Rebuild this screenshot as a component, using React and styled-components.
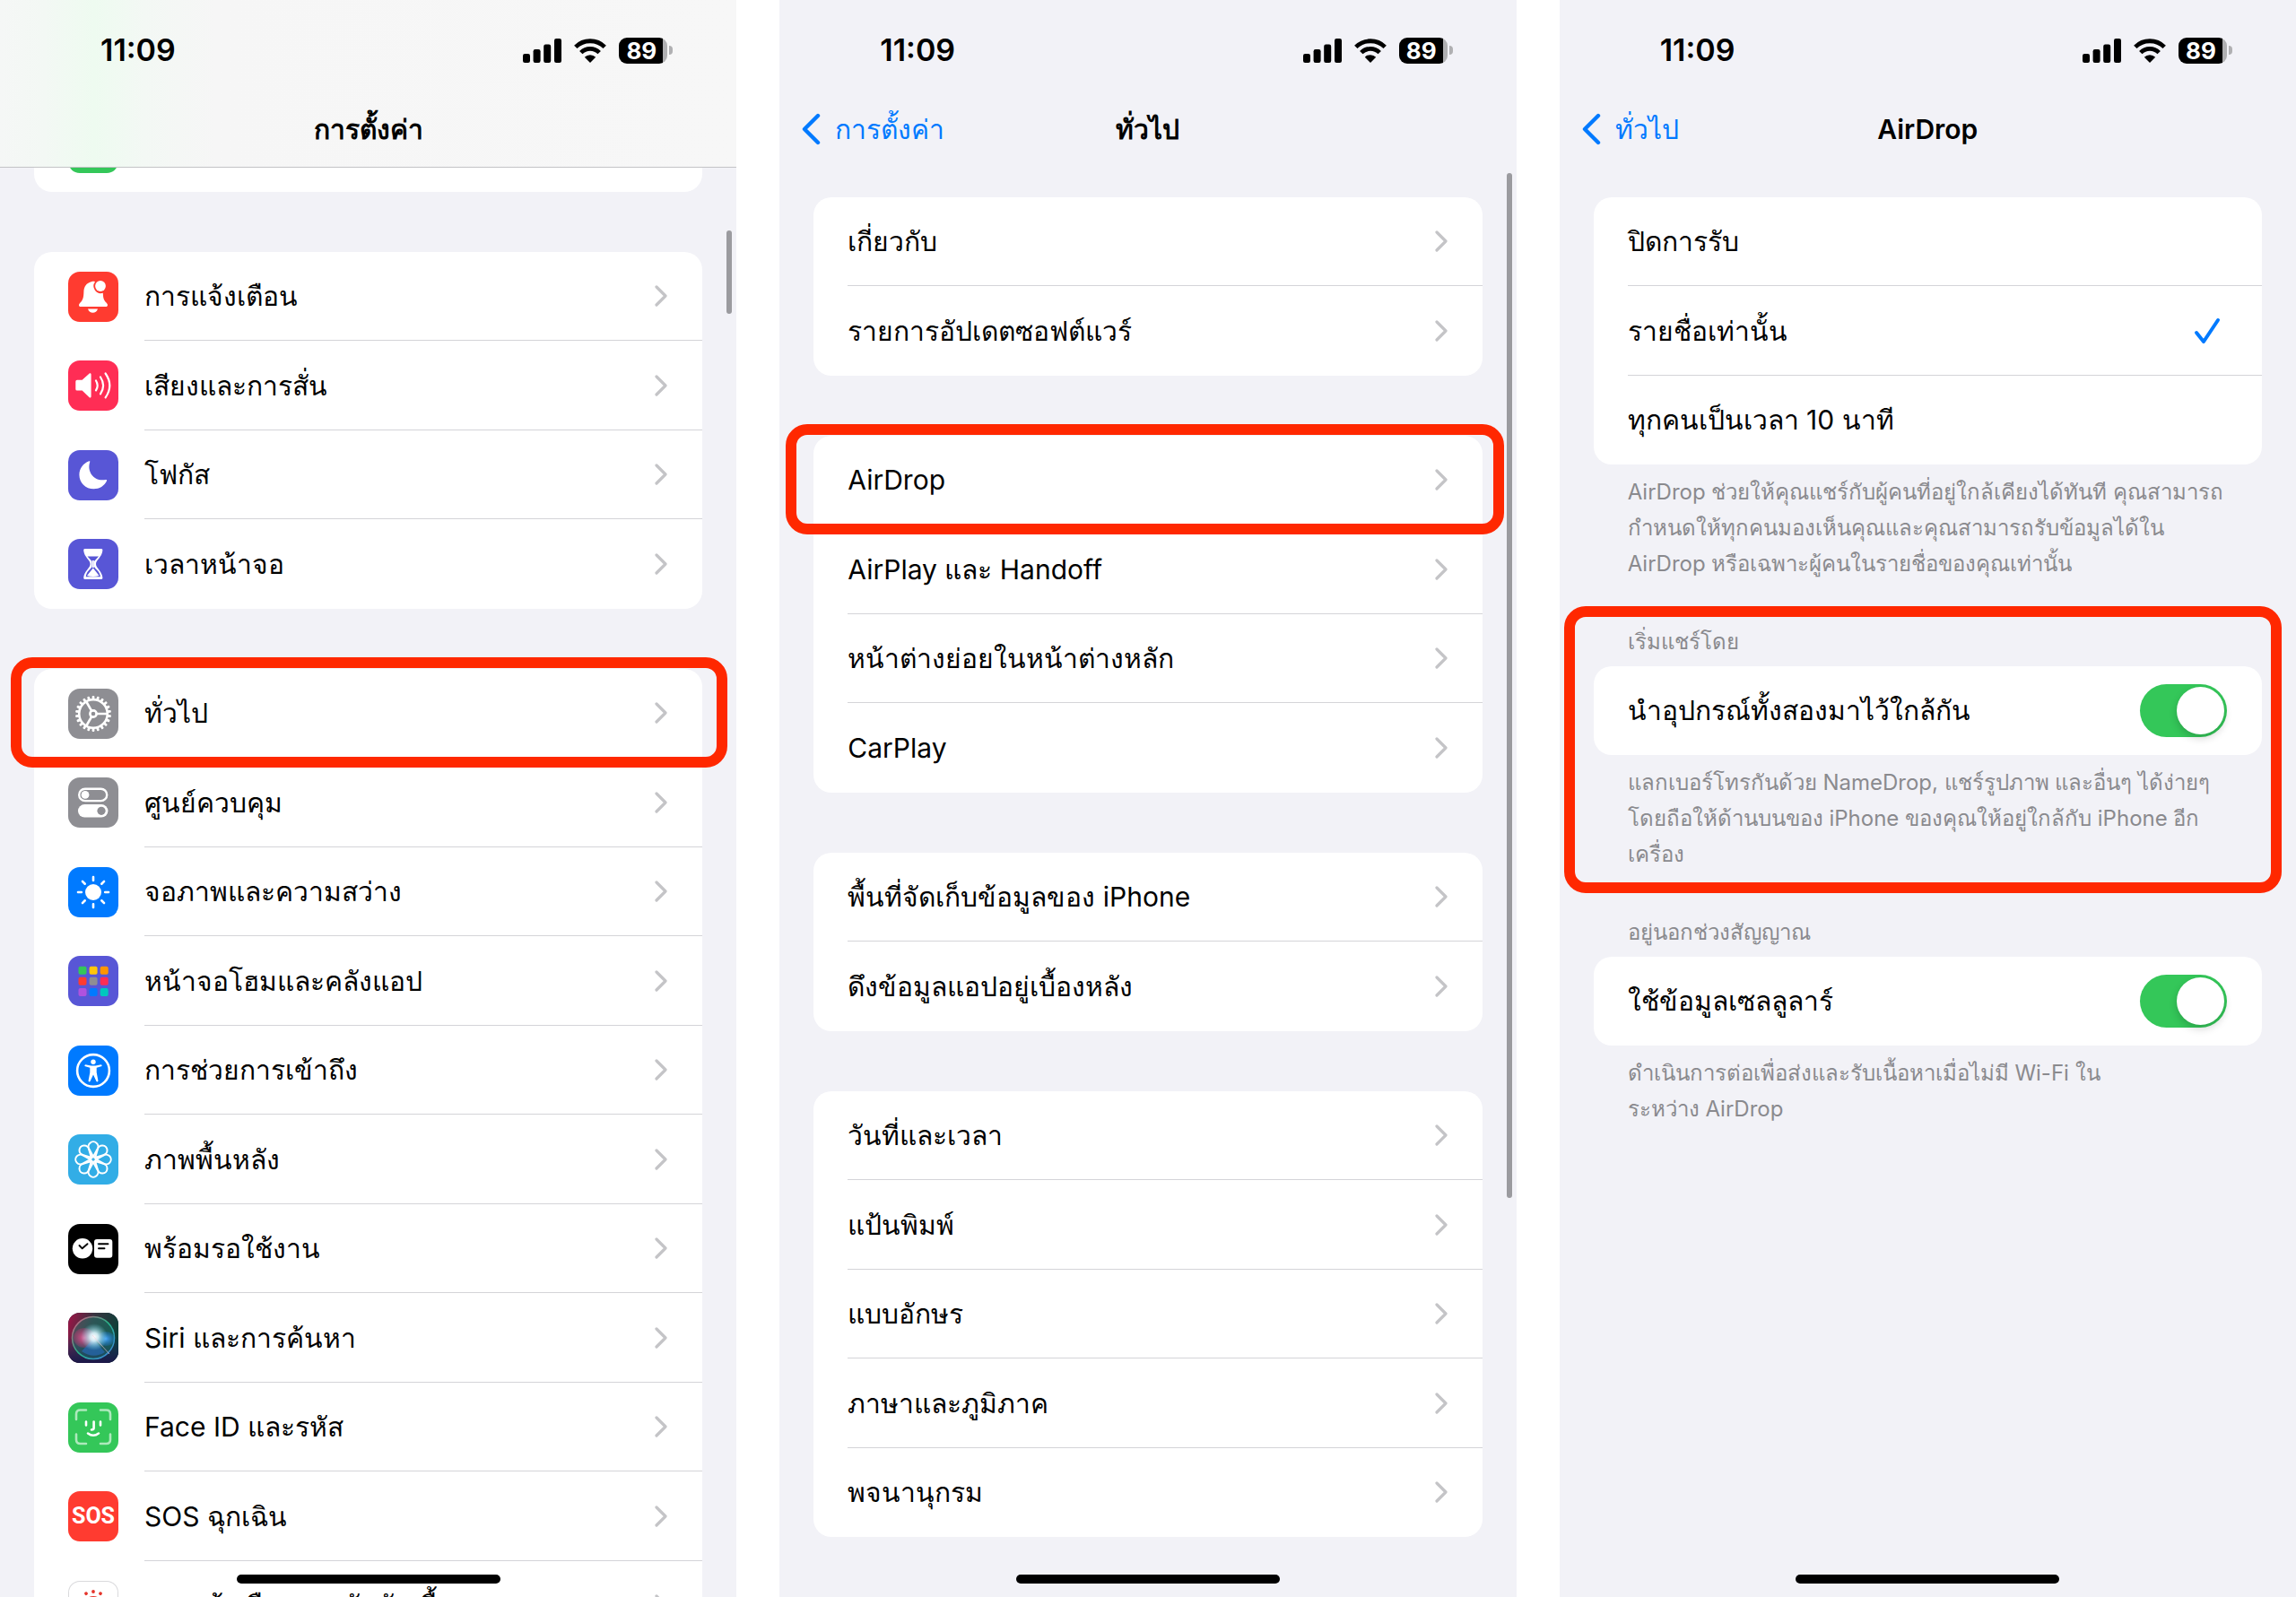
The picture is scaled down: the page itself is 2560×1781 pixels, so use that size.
import React from "react";
import styled, { createGlobalStyle, css } from "styled-components";

const color = {
  canvas: "#f2f2f7",
  ink: "#000000",
  muted: "#8a8a8e",
  line: "#d4d4d8",
  chevron: "#c4c4c7",
  blue: "#007aff",
  green: "#34c759",
  marker: "#ff2800",
};

const GlobalStyle = createGlobalStyle`
  *, *::before, *::after { box-sizing: border-box; }
  body {
    margin: 0;
    background: #ffffff;
    color: ${color.ink};
    font-family: Inter, Garuda, "Noto Sans", sans-serif;
    font-size: 30px;
    line-height: 40px;
  }
  h1, h2, p, ul { margin: 0; padding: 0; font: inherit; }
  ul { list-style: none; }
  a { color: inherit; text-decoration: none; }
  svg { display: block; flex: none; }
`;

/* ---------- page ---------- */

const Board = styled.main`
  display: grid;
  grid-template-columns: repeat(3, minmax(0, 1fr));
  gap: 48px;
  height: 100vh;
  overflow: hidden;
`;

const Screen = styled.section`
  position: relative;
  display: flex;
  flex-direction: column;
  overflow: hidden;
  background: ${color.canvas};
`;

const Header = styled.header`
  position: relative;
  z-index: 1;
  flex: none;
  padding-bottom: 10px;
  border-bottom: 1px solid transparent;
  ${(p) =>
    p.$frosted &&
    css`
      border-color: #c3c3c6;
      background: linear-gradient(90deg, #f5f7f6 0, #f3f8f4 50px, #eefbf0 105px, #f3f8f4 160px, #f6f6f6 240px, #f7f7f7 100%);
    `}
`;

const StatusBar = styled.div`
  display: flex;
  align-items: center;
  justify-content: space-between;
  height: 112px;
  padding: 0 71px 0 112px;
`;

const Clock = styled.time`
  font-size: 34px;
  font-weight: 600;
`;

const StatusIcons = styled.div`
  display: flex;
  align-items: center;
  gap: 14px;
`;

const Battery = styled.div`
  display: flex;
  align-items: center;
  gap: 2px;
`;

const BatteryBody = styled.span`
  width: 54px;
  height: 29px;
  padding-right: 4px;
  border-radius: 9px;
  background: linear-gradient(90deg, #000 0 49px, #b0b0b2 49px);
  color: #ffffff;
  font-size: 26px;
  font-weight: 700;
  line-height: 29px;
  text-align: center;
`;

const BatteryTip = styled.span`
  width: 4px;
  height: 10px;
  border-radius: 0 5px 5px 0;
  background: #b0b0b2;
`;

const NavBar = styled.nav`
  display: grid;
  grid-template-columns: 1fr auto 1fr;
  align-items: center;
  height: 64px;
`;

const Title = styled.h1`
  && { font-weight: 600; }
  grid-column: 2;
`;

const Back = styled.a`
  display: flex;
  align-items: center;
  gap: 16px;
  padding-left: 24px;
  && { color: ${color.blue}; }
`;

const Content = styled.div`
  display: flex;
  flex-direction: column;
  gap: 67px;
  padding: ${(p) => (p.$scrolled ? 0 : 33)}px 38px 0;
`;

/* ---------- lists ---------- */

const Card = styled.ul`
  flex: none;
  border-radius: 20px;
  background: #ffffff;
  ${(p) => p.$scrolledAway && css`margin-top: -72px;`}
`;

const Item = styled.li`
  position: relative;
  height: 99px;
  &:nth-child(even) { height: 100px; }
`;

const rowLayout = css`
  display: flex;
  align-items: center;
  gap: 29px;
  height: 100%;
  padding-left: 38px;
`;

const RowLink = styled.a`${rowLayout}`;
const RowLabel = styled.label`${rowLayout}`;

const RowBody = styled.span`
  display: flex;
  flex: 1;
  align-items: center;
  justify-content: space-between;
  height: 100%;
  padding-right: ${(p) => p.$inset || 39}px;
  border-bottom: 1px solid ${color.line};
  li:last-child & { border-color: transparent; }
`;

const Marker = styled.span`
  position: absolute;
  z-index: 2;
  top: ${(p) => p.$top || -13}px;
  right: ${(p) => p.$right}px;
  bottom: ${(p) => p.$bottom || -11}px;
  left: ${(p) => p.$left}px;
  border: 12px solid ${color.marker};
  border-radius: 24px;
  pointer-events: none;
`;

const Tile = styled.span`
  display: flex;
  flex: none;
  align-items: center;
  justify-content: center;
  overflow: hidden;
  width: 56px;
  height: 56px;
  border-radius: 13px;
  background: ${(p) => p.$bg};
  color: #ffffff;
  font: 700 25px/28px "Liberation Sans Narrow", Roboto, sans-serif;
  ${(p) => p.$outlined && css`box-shadow: inset 0 0 0 1px #d9d9dc;`}
`;

/* ---------- form parts ---------- */

const HiddenRadio = styled.input`
  position: absolute;
  opacity: 0;
  & ~ svg { visibility: hidden; }
  &:checked ~ svg { visibility: visible; }
`;

const Switch = styled.input`
  flex: none;
  appearance: none;
  display: flex;
  width: 97px;
  height: 59px;
  margin: 0;
  padding: 3px;
  border-radius: 30px;
  background: #e9e9eb;
  &:checked { justify-content: flex-end; background: ${color.green}; }
  &::before {
    content: "";
    width: 53px;
    height: 53px;
    border-radius: 50%;
    background: #ffffff;
    box-shadow: 0 4px 10px rgba(0, 0, 0, 0.18);
  }
`;

const Groups = styled.div`
  display: flex;
  flex-direction: column;
  gap: 47px;
  padding: 33px 38px 0;
`;

const Group = styled.section`
  position: relative;
  display: flex;
  flex-direction: column;
`;

const Caption = styled.h2`
  && { padding: 0 38px 7px; color: ${color.muted}; font-size: 24px; line-height: 40px; }
`;

const Note = styled.p`
  && { padding: 11px 0 0 38px; color: ${color.muted}; font-size: 24px; line-height: 40px; }
  white-space: nowrap;
`;

const HomeBar = styled.span`
  position: absolute;
  z-index: 3;
  bottom: 15px;
  left: 50%;
  width: 294px;
  height: 10px;
  margin-left: -147px;
  border-radius: 5px;
  background: #000000;
`;

const ScrollThumb = styled.span`
  position: absolute;
  z-index: 1;
  top: ${(p) => p.$top}px;
  right: 5px;
  width: 6px;
  height: ${(p) => p.$length}px;
  border-radius: 3px;
  background: #9b9b9f;
`;

/* ---------- drawings ---------- */

const Chevron = () => (
  <svg width="14" height="24" viewBox="0 0 14 24" fill="none" stroke={color.chevron} strokeWidth="3.2" strokeLinecap="round" strokeLinejoin="round" aria-hidden="true">
    <path d="M2 2 L12 12 L2 22" />
  </svg>
);

const BackChevron = () => (
  <svg width="22" height="36" viewBox="0 0 22 36" fill="none" stroke="currentColor" strokeWidth="4.4" strokeLinecap="round" strokeLinejoin="round" aria-hidden="true">
    <path d="M19 3 L4 18 L19 33" />
  </svg>
);

const Check = () => (
  <svg width="30" height="30" viewBox="0 0 30 30" fill="none" stroke={color.blue} strokeWidth="4" strokeLinecap="round" strokeLinejoin="round" aria-hidden="true">
    <path d="M3 17 L11 27 L27 3" />
  </svg>
);

const Signal = () => (
  <svg width="43" height="27" viewBox="0 0 43 27" aria-hidden="true">
    <rect x="0" y="17" width="8" height="10" rx="2.2" />
    <rect x="11.6" y="12" width="8" height="15" rx="2.2" />
    <rect x="23.2" y="6.5" width="8" height="20.5" rx="2.2" />
    <rect x="35" y="0" width="8" height="27" rx="2.2" />
  </svg>
);

const Wifi = () => (
  <svg width="36" height="27" viewBox="0 0 36 27" aria-hidden="true">
    <g fill="none" stroke="#000" strokeWidth="4.8">
      <path d="M1.8 9.4 A23 23 0 0 1 34.2 9.4" />
      <path d="M7.8 15.6 A14.4 14.4 0 0 1 28.2 15.6" />
    </g>
    <path d="M18 27 L11.8 20.7 A8.8 8.8 0 0 1 24.2 20.7 Z" />
  </svg>
);

const Glyph = ({ children }) => (
  <svg width="56" height="56" viewBox="0 0 56 56" fill="#fff" aria-hidden="true">{children}</svg>
);

const spin = (n, draw) => Array.from({ length: n }, (_, i) => draw((i * 360) / n, i));

const gridColors = ["#34c759", "#ffc60a", "#ff9500", "#ff3b30", "#8e8e93", "#ff2d55", "#af52de", "#007aff", "#00c7be"];

const glyphs = {
  bell: (
    <Glyph>
      <path d="M26.5 11 C20 12.5 17.6 17 17.4 22 C17.2 29 16.5 31.5 13.5 34.5 C11 37 12 39 14 39 H42 C44 39 45 37 42.5 34.5 C39.5 31.5 39 29 38.8 23.7 A8 8 0 0 1 30 11.3 C29 10.7 27.5 10.7 26.5 11 Z" />
      <circle cx="36" cy="16" r="5.9" />
      <path d="M22 41.5 H33 C32 44.5 30 45.8 27.5 45.8 C25 45.8 23 44.5 22 41.5 Z" />
    </Glyph>
  ),
  sound: (
    <Glyph>
      <path d="M10 21.8 H15.6 L23.4 14.7 C24.6 13.7 25.6 14.3 25.6 15.7 V40 C25.6 41.5 24.6 42 23.4 41 L15.6 33.6 H10 Q8.3 33.6 8.3 32 V23.4 Q8.3 21.8 10 21.8 Z" />
      <g fill="none" stroke="#fff" strokeWidth="2.2" strokeLinecap="round">
        <path d="M31 22.5 Q34.4 28 31 33.3" />
        <path d="M36 18.5 Q42.2 28 36 37.3" />
        <path d="M41.6 14.5 Q51 28 41.6 41.3" />
      </g>
    </Glyph>
  ),
  moon: (
    <Glyph>
      <path d="M23.3 12.3 C24 11.9 24.5 12.4 24.2 13.2 C20.5 24.5 29.5 35.5 41.7 33 C42.9 32.7 43.4 33.4 43 34.3 C40.5 40 34.7 43.3 28.5 43.3 C19.5 43.3 12.4 36.3 12.4 27.4 C12.4 20.7 16.8 14.8 23.3 12.3 Z" />
    </Glyph>
  ),
  hourglass: (
    <Glyph>
      <path d="M18.5 11 H37 Q38.7 11 38.4 13 C37.6 20.5 31 23.5 31 28 C31 32.5 37.6 35.5 38.4 43 Q38.7 45 37 45 H18.5 Q17 45 17.2 43 C18 35.5 24.6 32.5 24.6 28 C24.6 23.5 18 20.5 17.2 13 Q17 11 18.5 11 Z" />
      <path fill="#5856d6" d="M21.5 19.5 H34 L29 25 V31 C30.5 34 35.5 36 36 42.5 H19.7 C20.2 36 25 34 26.5 31 V25 Z" />
      <path d="M27.8 32.5 L34.5 41 Q28 43 21 41 Z" />
      <path d="M19 42.5 H36.5 V44.5 H19 Z M26.8 24 H28.8 V32 H26.8 Z" />
    </Glyph>
  ),
  gear: (
    <Glyph>
      {spin(22, (a) => <rect key={a} x="26.6" y="8" width="2.8" height="5" rx="1" transform={`rotate(${a} 28 28)`} />)}
      <g fill="none" stroke="#fff" strokeWidth="2.6">
        <circle cx="28" cy="28" r="15.8" />
        <circle cx="28" cy="28" r="3.6" />
        {spin(3, (a) => <path key={a} d="M31.6 28 H43" transform={`rotate(${a} 28 28)`} />)}
      </g>
    </Glyph>
  ),
  toggles: (
    <Glyph>
      <rect x="12.2" y="12.7" width="31" height="13.4" rx="6.7" fill="none" stroke="#fff" strokeWidth="2.4" />
      <circle cx="19" cy="19.4" r="4.4" />
      <rect x="11" y="30" width="33.4" height="14.6" rx="7.3" />
      <circle cx="37" cy="37.3" r="4.6" fill="#8e8e93" />
    </Glyph>
  ),
  sun: (
    <Glyph>
      <circle cx="28" cy="28" r="9" />
      {spin(8, (a) => <rect key={a} x="26.7" y="9.7" width="2.6" height="6.4" rx="1.2" transform={`rotate(${a} 28 28)`} />)}
    </Glyph>
  ),
  grid: (
    <Glyph>
      {gridColors.map((c, i) => <rect key={c} x={11.5 + (i % 3) * 12.1} y={11.7 + Math.floor(i / 3) * 12.1} width="9" height="9" rx="2" fill={c} />)}
    </Glyph>
  ),
  person: (
    <Glyph>
      <circle cx="28" cy="28" r="17.9" fill="none" stroke="#fff" strokeWidth="2.6" />
      <circle cx="28" cy="18.3" r="2.7" />
      <path d="M19.3 21.3 L25.5 22.5 H30.5 L36.7 21.3 Q37.8 21.3 37.6 23 L31.7 24.8 V30 L33.5 39.5 Q32.6 41 31.5 40 L28 32.5 L24.5 40 Q23.4 41 22.5 39.5 L24.3 30 V24.8 L18.4 23 Q18.2 21.3 19.3 21.3 Z" />
    </Glyph>
  ),
  flower: (
    <Glyph>
      <g fill="none" stroke="#fff" strokeWidth="2">
        {spin(8, (a) => <path key={a} d="M28 25 L23.6 16.8 A5.4 5.4 0 1 1 32.4 16.8 Z" transform={`rotate(${a} 28 28)`} />)}
        <circle cx="28" cy="28" r="3" />
      </g>
    </Glyph>
  ),
  standby: (
    <Glyph>
      <circle cx="16" cy="27.3" r="11.2" />
      <rect x="29" y="17" width="20.3" height="20.7" rx="3" />
      <g fill="none" stroke="#000" strokeWidth="1.9" strokeLinecap="round" strokeLinejoin="round">
        <path d="M12.5 24 L15.7 27.3 L21.5 22.2 M34 22.3 H44.5 M34 27.3 H40.5" />
      </g>
    </Glyph>
  ),
  siri: (
    <Glyph>
      <defs>
        <linearGradient id="siri-base" x1="0" y1="0.1" x2="1" y2="0.4">
          <stop offset="0" stopColor="#9c1446" />
          <stop offset="0.45" stopColor="#3a3340" />
          <stop offset="1" stopColor="#0b4038" />
        </linearGradient>
        <linearGradient id="siri-low" x1="0" y1="0" x2="0" y2="1">
          <stop offset="0.45" stopColor="#162f66" stopOpacity="0" />
          <stop offset="1" stopColor="#1d1648" />
        </linearGradient>
        <linearGradient id="siri-ring" x1="0" y1="0" x2="1" y2="1">
          <stop offset="0" stopColor="#e0507f" />
          <stop offset="0.5" stopColor="#27b388" />
          <stop offset="1" stopColor="#3f7fe8" />
        </linearGradient>
        <radialGradient id="siri-glow">
          <stop offset="0" stopColor="#ffffff" />
          <stop offset="0.3" stopColor="#dff8ff" stopOpacity="0.9" />
          <stop offset="1" stopColor="#6fd6e8" stopOpacity="0" />
        </radialGradient>
        <radialGradient id="siri-pink">
          <stop offset="0" stopColor="#ff5c9c" stopOpacity="0.9" />
          <stop offset="1" stopColor="#e0307a" stopOpacity="0.25" />
        </radialGradient>
        <radialGradient id="siri-blue">
          <stop offset="0" stopColor="#4aa8ff" stopOpacity="0.95" />
          <stop offset="1" stopColor="#1f78d8" stopOpacity="0.25" />
        </radialGradient>
      </defs>
      <rect width="56" height="56" fill="url(#siri-base)" />
      <rect width="56" height="56" fill="url(#siri-low)" />
      <circle cx="28" cy="28" r="23.5" fill="#1e8a78" fillOpacity="0.4" stroke="url(#siri-ring)" strokeWidth="1.5" />
      <ellipse cx="18" cy="28" rx="12" ry="11" fill="url(#siri-pink)" />
      <ellipse cx="42" cy="29" rx="10" ry="8" fill="url(#siri-blue)" />
      <path d="M28 29 L15 43 Q28 52 41 44 Z" fill="#2a6fcb" fillOpacity="0.55" />
      <circle cx="29" cy="27" r="15" fill="url(#siri-glow)" />
      <path d="M27 25 L46 46" stroke="#f4c9dc" strokeOpacity="0.6" strokeWidth="1" />
    </Glyph>
  ),
  face: (
    <Glyph>
      <g fill="none" stroke="#fff" strokeLinecap="round" strokeWidth="2.6">
        <path strokeOpacity="0.6" d="M9 19 V13 Q9 8.5 13.5 8.5 H20 M36 8.5 H42.5 Q47 8.5 47 13 V19 M47 35.5 V41.5 Q47 46 42.5 46 H36 M20 46 H13.5 Q9 46 9 41.5 V35.5" />
        <path d="M20 21.5 V25.5 M36 21.5 V25.5 M28.6 21.5 V28.5 Q28.6 30.5 26 30.5 M22 34.5 Q28 39 34 34.5" />
      </g>
    </Glyph>
  ),
  exposure: (
    <Glyph>
      <g fill="#e5352b">
        {spin(12, (a) => <circle key={a} cx="28" cy="12" r="1.9" transform={`rotate(${a} 28 28)`} />)}
        <circle cx="28" cy="28" r="11" />
      </g>
    </Glyph>
  ),
};

/* ---------- data ---------- */

const alertRows = [
  { icon: "bell", bg: "#ff3b30", label: "การแจ้งเตือน" },
  { icon: "sound", bg: "#ff2d55", label: "เสียงและการสั่น" },
  { icon: "moon", bg: "#5856d6", label: "โฟกัส" },
  { icon: "hourglass", bg: "#5856d6", label: "เวลาหน้าจอ" },
];

const systemRows = [
  { icon: "gear", bg: "#8e8e93", label: "ทั่วไป", marked: true },
  { icon: "toggles", bg: "#8e8e93", label: "ศูนย์ควบคุม" },
  { icon: "sun", bg: "#007aff", label: "จอภาพและความสว่าง" },
  { icon: "grid", bg: "#5856d6", label: "หน้าจอโฮมและคลังแอป" },
  { icon: "person", bg: "#007aff", label: "การช่วยการเข้าถึง" },
  { icon: "flower", bg: "#32ade6", label: "ภาพพื้นหลัง" },
  { icon: "standby", bg: "#000000", label: "พร้อมรอใช้งาน" },
  { icon: "siri", bg: "#1c2340", label: "Siri และการค้นหา" },
  { icon: "face", bg: "#34c759", label: "Face ID และรหัส" },
  { text: "SOS", bg: "#ff3b30", label: "SOS ฉุกเฉิน" },
  { icon: "exposure", bg: "#ffffff", label: "การแจ้งเตือนการสัมผัสเชื้อ", outlined: true },
];

const generalGroups = [
  [{ label: "เกี่ยวกับ" }, { label: "รายการอัปเดตซอฟต์แวร์" }],
  [{ label: "AirDrop", marked: true }, { label: "AirPlay และ Handoff" }, { label: "หน้าต่างย่อยในหน้าต่างหลัก" }, { label: "CarPlay" }],
  [{ label: "พื้นที่จัดเก็บข้อมูลของ iPhone" }, { label: "ดึงข้อมูลแอปอยู่เบื้องหลัง" }],
  [{ label: "วันที่และเวลา" }, { label: "แป้นพิมพ์" }, { label: "แบบอักษร" }, { label: "ภาษาและภูมิภาค" }, { label: "พจนานุกรม" }],
];

const receiveOptions = ["ปิดการรับ", "รายชื่อเท่านั้น", "ทุกคนเป็นเวลา 10 นาที"];

/* ---------- pieces ---------- */

function ScreenHeader({ title, back, frosted }) {
  return (
    <Header $frosted={frosted}>
      <StatusBar>
        <Clock>11:09</Clock>
        <StatusIcons>
          <Signal />
          <Wifi />
          <Battery>
            <BatteryBody>89</BatteryBody>
            <BatteryTip />
          </Battery>
        </StatusIcons>
      </StatusBar>
      <NavBar>
        {back && (
          <Back href="#back">
            <BackChevron />
            {back}
          </Back>
        )}
        <Title>{title}</Title>
      </NavBar>
    </Header>
  );
}

function LinkList({ rows, markLeft, markRight }) {
  return (
    <Card>
      {rows.map((row) => (
        <Item key={row.label}>
          <RowLink href="#open">
            {row.bg && (
              <Tile $bg={row.bg} $outlined={row.outlined}>
                {row.text || glyphs[row.icon]}
              </Tile>
            )}
            <RowBody>
              {row.label}
              <Chevron />
            </RowBody>
          </RowLink>
          {row.marked && <Marker $left={markLeft} $right={markRight} />}
        </Item>
      ))}
    </Card>
  );
}

function SwitchCard({ label }) {
  return (
    <Card>
      <Item>
        <RowLabel>
          <RowBody>
            {label}
            <Switch type="checkbox" role="switch" defaultChecked />
          </RowBody>
        </RowLabel>
      </Item>
    </Card>
  );
}

export default function App() {
  return (
    <>
      <GlobalStyle />
      <Board>
        <Screen>
          <ScreenHeader title="การตั้งค่า" frosted />
          <Content $scrolled>
            <Card $scrolledAway>
              <Item>
                <RowLink as="div">
                  <Tile $bg={color.green} />
                </RowLink>
              </Item>
            </Card>
            <LinkList rows={alertRows} />
            <LinkList rows={systemRows} markLeft={-26} markRight={-28} />
          </Content>
          <ScrollThumb $top={257} $length={93} />
          <HomeBar />
        </Screen>

        <Screen>
          <ScreenHeader title="ทั่วไป" back="การตั้งค่า" />
          <Content>
            {generalGroups.map((rows) => (
              <LinkList key={rows[0].label} rows={rows} markLeft={-31} markRight={-24} />
            ))}
          </Content>
          <ScrollThumb $top={193} $length={1143} />
          <HomeBar />
        </Screen>

        <Screen>
          <ScreenHeader title="AirDrop" back="ทั่วไป" />
          <Groups>
            <Group>
              <Card>
                {receiveOptions.map((option, i) => (
                  <Item key={option}>
                    <RowLabel>
                      <RowBody $inset={46}>
                        {option}
                        <HiddenRadio type="radio" name="receive" defaultChecked={i === 1} />
                        <Check />
                      </RowBody>
                    </RowLabel>
                  </Item>
                ))}
              </Card>
              <Note>
                AirDrop ช่วยให้คุณแชร์กับผู้คนที่อยู่ใกล้เคียงได้ทันที คุณสามารถ
                <br />
                กำหนดให้ทุกคนมองเห็นคุณและคุณสามารถรับข้อมูลได้ใน
                <br />
                AirDrop หรือเฉพาะผู้คนในรายชื่อของคุณเท่านั้น
              </Note>
            </Group>
            <Group>
              <Caption>เริ่มแชร์โดย</Caption>
              <SwitchCard label="นำอุปกรณ์ทั้งสองมาไว้ใกล้กัน" />
              <Note>
                แลกเบอร์โทรกันด้วย NameDrop, แชร์รูปภาพ และอื่นๆ ได้ง่ายๆ
                <br />
                โดยถือให้ด้านบนของ iPhone ของคุณให้อยู่ใกล้กับ iPhone อีก
                <br />
                เครื่อง
              </Note>
              <Marker $top={-20} $right={-22} $bottom={-23} $left={-33} />
            </Group>
            <Group>
              <Caption>อยู่นอกช่วงสัญญาณ</Caption>
              <SwitchCard label="ใช้ข้อมูลเซลลูลาร์" />
              <Note>
                ดำเนินการต่อเพื่อส่งและรับเนื้อหาเมื่อไม่มี Wi-Fi ใน
                <br />
                ระหว่าง AirDrop
              </Note>
            </Group>
          </Groups>
          <HomeBar />
        </Screen>
      </Board>
    </>
  );
}
